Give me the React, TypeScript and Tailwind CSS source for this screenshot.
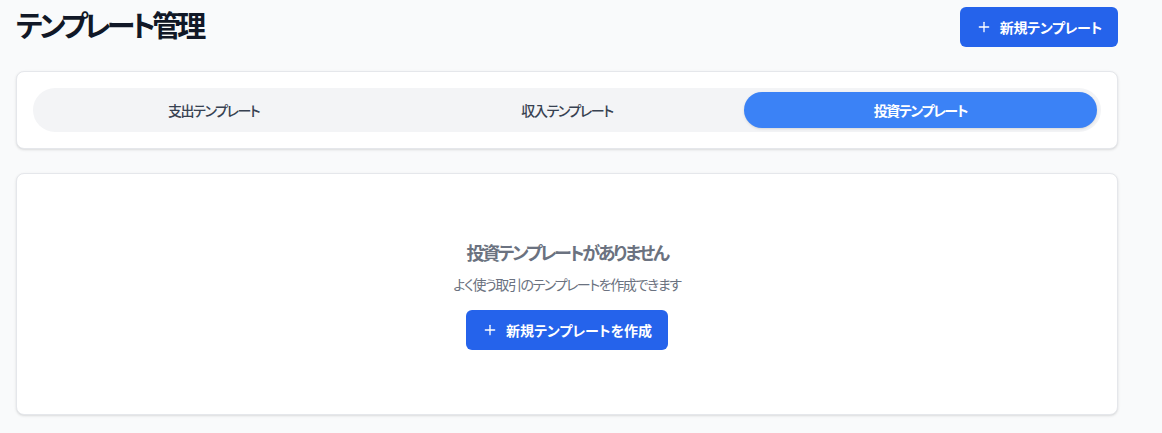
import React from "react";
import { Plus } from "lucide-react";

export default function App() {
  const tabs = ["支出テンプレート", "収入テンプレート", "投資テンプレート"];
  const active = 2;
  return (
    <div className="min-h-screen bg-[#f9fafb] font-['Noto_Sans_CJK_JP','Noto_Sans',sans-serif] [font-feature-settings:'palt']">
      <div className="ml-4 w-[1102px] pt-[7px]">
        <div className="flex h-10 items-center justify-between mb-6">
          <h1 className="-mt-1 text-[29px] font-bold tracking-[-0.13em] text-[#111827]">テンプレート管理</h1>
          <button className="flex h-10 items-center gap-2 rounded-md bg-[#2563eb] px-4 text-sm font-bold tracking-[-0.02em] text-white">
            <Plus className="h-4 w-4" strokeWidth={2} />
            新規テンプレート
          </button>
        </div>

        <div className="mb-6 rounded-lg border border-[#e5e7eb] bg-white p-4 shadow-sm">
          <div className="grid grid-cols-3 rounded-full bg-[#f3f4f6] p-1">
            {tabs.map((t, i) => (
              <button
                key={t}
                className={
                  i === active
                    ? "h-9 rounded-full bg-[#3b82f6] text-sm font-semibold tracking-[-0.1em] text-white shadow-sm"
                    : "h-9 rounded-full text-sm font-medium tracking-[-0.1em] text-[#374151]"
                }
              >
                {t}
              </button>
            ))}
          </div>
        </div>

        <div className="rounded-lg border border-[#e5e7eb] bg-white py-16 shadow-sm">
          <div className="flex flex-col items-center">
            <h3 className="mb-2 text-lg font-semibold leading-7 tracking-[-0.13em] text-[#6b7280]">
              投資テンプレートがありません
            </h3>
            <p className="mb-4 text-sm tracking-[-0.1em] text-[#6b7280]">
              よく使う取引のテンプレートを作成できます
            </p>
            <button className="flex h-10 items-center gap-2 rounded-md bg-[#2563eb] px-4 text-sm font-bold text-white">
              <Plus className="h-4 w-4" strokeWidth={2} />
              新規テンプレートを作成
            </button>
          </div>
        </div>
      </div>
    </div>
  );
}
